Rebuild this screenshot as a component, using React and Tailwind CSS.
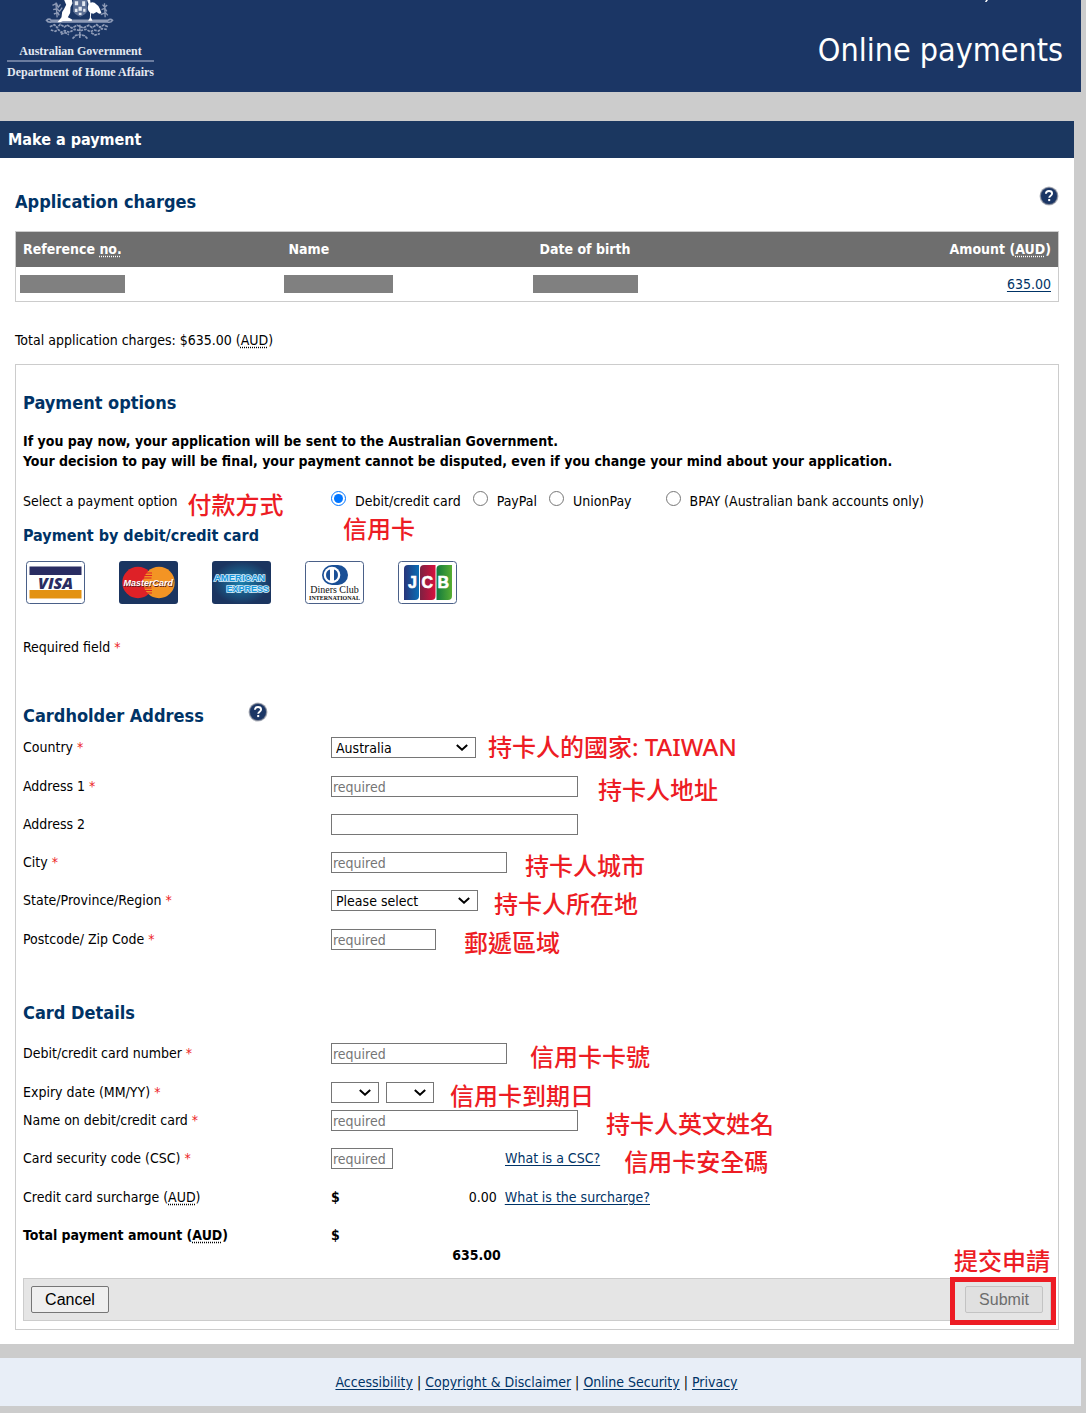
import { useState } from 'react'

const paymentOptions = [
  { id: 'card', label: 'Debit/credit card', gap: 'ml-0' },
  { id: 'paypal', label: 'PayPal', gap: 'ml-3' },
  { id: 'unionpay', label: 'UnionPay', gap: 'ml-3' },
  { id: 'bpay', label: 'BPAY (Australian bank accounts only)', gap: 'ml-[34px]' },
]

const footerLinks = ['Accessibility', 'Copyright & Disclaimer', 'Online Security', 'Privacy']

const fieldClass = 'h-[21px] shrink-0 border border-[#767676] bg-white'

const Note = ({ className = '', children }) => (
  <span
    lang="zh-Hant"
    className={`h-5 shrink-0 whitespace-nowrap font-['Noto_Sans','Noto_Sans_CJK_TC',sans-serif] text-2xl leading-5 font-medium text-[#ed1c24] ${className}`}
  >
    {children}
  </span>
)

const Aud = () => (
  <>
    (<abbr title="Australian dollars" className="underline-offset-2">AUD</abbr>)
  </>
)

const Link = ({ children }) => (
  <a href="#" className="text-[#003366] underline underline-offset-2">{children}</a>
)

const HelpButton = () => (
  <button type="button" aria-label="Help" className="size-5 shrink-0">
    <svg viewBox="0 0 20 20" className="size-5">
      <circle cx="10" cy="10" r="9.5" fill="#b4b8c0" />
      <circle cx="10" cy="10" r="8.7" fill="#6b7388" />
      <circle cx="10" cy="10" r="8" fill="#1b3665" />
      <path
        d="M6.9 7.8C7 5.900 8.300 5 10 5c1.900 0 3.100 1 3.100 2.500 0 2.200-2.900 2.200-2.900 4.300"
        fill="none"
        stroke="#fff"
        strokeWidth="1.900"
      />
      <rect x="9.200" y="13" width="2" height="2.100" fill="#fff" />
    </svg>
  </button>
)

const Crest = () => (
  <svg viewBox="130 0 215 120" className="h-10 w-[72px]" aria-hidden="true">
    {/* shield */}
    <path d="M217 0h42v34q-4 10-21 16q-17-6-21-16z" fill="#5d7095" />
    <path d="M222 4h10v12h-10zM244 4h9v14h-9zM233 20h10v12h-10zM222 26h8v10h-8zM247 26h7v9h-7zM234 38h8v7h-8z" fill="#e3e8f0" />
    {/* wattle and scrolls */}
    <g fill="none" stroke="#8d9ab6" strokeWidth="5">
      <path d="M137 61q8-7 14 0h170q8-6 14 0q-5 8-15 5H152q-11 2-15-5z" />
      <path d="M155 16l12-6 5 12 7-9M157 29l11-3 8 8 8-11M159 42l12-4 4 8M165 8l4 44M305 14l7 8 7-7M302 29l10-4 6 9M300 44l14-6 7 8M311 10l2 42" strokeWidth="4" />
      <path d="M147 80l14-6 8 9 9-10 13 8 8-6 14 9 16-8 18 8 17-8 10 7 14-9 9 8 12-7 14 6" strokeDasharray="9 2" />
      <path d="M150 90l13 4 10-5 8 8 11-5 14 5 15-9 17 4 18-4 12 7 12-5 13 3 9-7 16 2" strokeDasharray="8 3" />
      <path d="M180 103l14-5 10 6M215 116l10-10 12-2 14 3 9 9M271 98l12 7 14-4M237 74v40" strokeDasharray="9 2" />
    </g>
    {/* kangaroo */}
    <path d="M190 0L213 0L215 10L209 22L208 39L201 52L213 58V63H186L180 66L170 67L182 52L184 36L190 26L196 14z" fill="#fff" />
    {/* emu */}
    <path d="M259 0h9l1 8q5-3 12 0q12 8 16 18l5 14l-7 1l-8-5l-9 5l-7-1l-1 12l5 10h-13l5-8l1-16q-8-6-7-17l2-9z" fill="#fff" />
  </svg>
)

const CardLogos = () => (
  <div className="mt-[15px] flex gap-[34px] pl-[3px]">
    <svg viewBox="0 0 59 43" className="h-[43px] w-[59px]" role="img" aria-label="Visa">
      <rect x=".5" y=".5" width="58" height="42" rx="3" fill="#fff" stroke="#4a6088" />
      <rect x="3.500" y="5.500" width="52" height="8.500" fill="#292c62" />
      <rect x="3.500" y="29" width="52" height="8.500" fill="#e39211" />
      <text x="12" y="27.500" fontFamily="Open Sans" fontWeight="800" fontStyle="italic" fontSize="16" fill="#292c62">VISA</text>
    </svg>
    <svg viewBox="0 0 59 43" className="h-[43px] w-[59px]" role="img" aria-label="MasterCard">
      <rect width="59" height="43" rx="3" fill="#1b3560" />
      <circle cx="19" cy="21.500" r="15.700" fill="#de2127" />
      <circle cx="40" cy="21.500" r="15.700" fill="#f39424" />
      <path d="M26 12h7M25 14.500h8M24.500 17h8M24.500 27h8M25 29.500h8M26 32h7" stroke="#de2127" strokeWidth="1.200" />
      <g fontFamily="Liberation Sans" fontWeight="700" fontStyle="italic" fontSize="9">
        <text x="5" y="26" fill="#5c1a1f" aria-hidden="true">MasterCard</text>
        <text x="4.500" y="25" fill="#fff">MasterCard</text>
      </g>
    </svg>
    <svg viewBox="0 0 59 43" className="h-[43px] w-[59px]" role="img" aria-label="American Express">
      <defs>
        <radialGradient id="amex">
          <stop offset="0" stopColor="#1a80ad" />
          <stop offset="1" stopColor="#1b3560" />
        </radialGradient>
      </defs>
      <rect width="59" height="43" rx="3" fill="url(#amex)" />
      <g fontFamily="Liberation Sans" fontWeight="700" fill="#1596dc" stroke="#d8eefa" strokeWidth="1.600" paintOrder="stroke">
        <text x="2" y="20" fontSize="9.500">AMERICAN</text>
        <text x="14.500" y="31" fontSize="9">EXPRESS</text>
      </g>
    </svg>
    <svg viewBox="0 0 59 43" className="h-[43px] w-[59px]" role="img" aria-label="Diners Club International">
      <rect x=".5" y=".5" width="58" height="42" rx="3" fill="#fff" stroke="#4a6088" />
      <path d="M27 4h6a10 10 0 0 1 0 20h-6a10 10 0 0 1 0-20z" fill="#1a4f96" />
      <circle cx="27" cy="14" r="8.300" fill="#fff" />
      <path d="M25 8.500a5.800 5.800 0 0 0 0 11zM29 8.500a5.800 5.800 0 0 1 0 11z" fill="#1a4f96" />
      <text x="29.500" y="32" textAnchor="middle" fontFamily="Liberation Serif" fontSize="10" fill="#111">Diners Club</text>
      <text x="29.500" y="39" textAnchor="middle" fontFamily="Liberation Serif" fontWeight="700" fontSize="6" fill="#111">INTERNATIONAL</text>
    </svg>
    <svg viewBox="0 0 59 43" className="h-[43px] w-[59px]" role="img" aria-label="JCB">
      <defs>
        <linearGradient id="jcb-blue"><stop offset="0" stopColor="#27357a" /><stop offset="1" stopColor="#0a6db5" /></linearGradient>
        <linearGradient id="jcb-red"><stop offset="0" stopColor="#7c2142" /><stop offset="1" stopColor="#d8103d" /></linearGradient>
        <linearGradient id="jcb-green"><stop offset="0" stopColor="#127a3e" /><stop offset="1" stopColor="#57ad33" /></linearGradient>
      </defs>
      <rect x=".5" y=".5" width="58" height="42" rx="3" fill="#fff" stroke="#4a6088" />
      <path d="M10 4h11v31q0 4-4 4H6V8q0-4 4-4z" fill="url(#jcb-blue)" />
      <path d="M26 4h11.500v31q0 4-4 4H22V8q0-4 4-4z" fill="url(#jcb-red)" />
      <path d="M43 4h11v31q0 4-4 4H38.500V8q0-4 4.500-4z" fill="url(#jcb-green)" />
      <g fontFamily="Liberation Sans" fontWeight="700" fontSize="16" fill="#fff" stroke="#fff" strokeWidth=".6">
        <text x="10" y="27">J</text>
        <text x="23.500" y="27">C</text>
        <text x="39.500" y="27">B</text>
      </g>
    </svg>
  </div>
)

const Row = ({ id, label, required, className = 'h-[38px]', children }) => (
  <div className={`flex items-start ${className}`}>
    <label htmlFor={id} className="w-[308px] shrink-0">
      {label}
      {required && <span className="text-[#ed1c24]"> *</span>}
    </label>
    {children}
  </div>
)

const TextField = ({ id, width, placeholder = 'required' }) => (
  <input
    id={id}
    type="text"
    placeholder={placeholder}
    className={`${fieldClass} px-px placeholder:text-[#757575] ${width}`}
  />
)

const Select = ({ width, children, ...props }) => (
  <div className="relative flex shrink-0">
    <select className={`${fieldClass} appearance-none pl-1 leading-4 ${width}`} {...props}>
      {children}
    </select>
    <svg viewBox="0 0 12 7" className="pointer-events-none absolute top-[7px] right-2 h-[7px] w-3" aria-hidden="true">
      <path d="M.8 1L6 5.700L11.200 1" fill="none" stroke="#000" strokeWidth="2" />
    </svg>
  </div>
)

const App = () => {
  const [option, setOption] = useState('card')

  return (
    <div className="min-h-screen bg-[#cccccc] font-['DejaVu_Sans_Condensed','DejaVu_Sans',sans-serif] text-sm leading-5 text-black">
      <header className="relative mr-[5px] flex h-[92px] items-start justify-between bg-[#1b3665] text-white">
        <div className="flex flex-col items-center pl-[7px] font-['Liberation_Serif',serif] text-xs leading-4 font-bold text-[#e3e8f0]">
          <Crest />
          <p className="mt-[3px]">Australian Government</p>
          <div className="mt-px h-[2px] w-full bg-[#6b7c9f]" />
          <p className="mt-[2px]">Department of Home Affairs</p>
        </div>
        <h1 className="pt-[30px] pr-[18px] text-[32px] leading-10">Online payments</h1>
        <svg viewBox="0 0 4 2" className="absolute top-0 right-[93px] h-[2px] w-1" aria-hidden="true">
          <path d="M1 2L2 0H4L2.500 2z" fill="#fff" />
        </svg>
      </header>

      <main className="mt-[29px] mr-3 bg-white">
        <h2 className="bg-[#1b3760] pl-2 text-base leading-[37px] font-bold text-white">Make a payment</h2>

        <div className="px-[15px] pt-7 pb-[14px]">
          <div className="flex items-start justify-between">
            <h3 className="pt-1 text-lg leading-6 font-bold text-[#003366]">Application charges</h3>
            <HelpButton />
          </div>

          <table className="mt-[17px] w-full border-collapse border border-[#cccccc] text-left">
            <thead className="bg-[#6e6e6e] text-white">
              <tr className="h-[35px]">
                <th className="w-[266px] pl-[7px]">Reference <abbr title="number" className="underline-offset-2">no.</abbr></th>
                <th className="w-[251px] pl-[7px]">Name</th>
                <th className="pl-[7px]">Date of birth</th>
                <th className="pr-[7px] text-right">Amount <Aud /></th>
              </tr>
            </thead>
            <tbody>
              <tr className="h-[35px]">
                <td className="pl-1"><div className="h-[18px] w-[105px] bg-[#808080]" /></td>
                <td className="pl-0.5"><div className="h-[18px] w-[109px] bg-[#808080]" /></td>
                <td><div className="h-[18px] w-[105px] bg-[#808080]" /></td>
                <td className="pr-[7px] text-right"><Link>635.00</Link></td>
              </tr>
            </tbody>
          </table>

          <p className="mt-7">Total application charges: $635.00 <Aud /></p>

          <form className="mt-[14px] border border-[#cccccc] px-[7px] pb-2" onSubmit={(e) => e.preventDefault()}>
            <h3 className="mt-[26px] text-lg leading-6 font-bold text-[#003366]">Payment options</h3>
            <p className="mt-4 font-bold">
              If you pay now, your application will be sent to the Australian Government.
              <br />
              Your decision to pay will be final, your payment cannot be disputed, even if you change your mind about your application.
            </p>

            <fieldset className="mt-5 flex h-5 items-start">
              <div className="flex w-[308px] shrink-0">
                <span>Select a payment option</span>
                <Note className="ml-[10px] pt-1">付款方式</Note>
              </div>
              {paymentOptions.map(({ id, label, gap }) => (
                <label key={id} className={`relative flex shrink-0 items-start ${gap}`}>
                  <input
                    type="radio"
                    name="payment"
                    checked={option === id}
                    onChange={() => setOption(id)}
                    className="size-[15px] accent-[#0075ff]"
                  />
                  <span className="pl-[9px] whitespace-nowrap">{label}</span>
                  {id === 'card' && <Note className="absolute top-7 left-3">信用卡</Note>}
                </label>
              ))}
            </fieldset>

            <h4 className="mt-[15px] text-base leading-5 font-bold text-[#003366]">Payment by debit/credit card</h4>
            <CardLogos />

            <p className="mt-[33px]">Required field <span className="text-[#ed1c24]">*</span></p>

            <div className="mt-[45px] flex h-[35px] items-start">
              <h3 className="w-[225px] pt-[2px] text-lg leading-6 font-bold text-[#003366]">Cardholder Address</h3>
              <HelpButton />
            </div>
            <Row id="country" label="Country" required className="h-[39px]">
              <Select id="country" width="w-[145px]">
                <option>Australia</option>
              </Select>
              <Note className="ml-3">持卡人的國家: TAIWAN</Note>
            </Row>
            <Row id="address1" label="Address 1" required>
              <TextField id="address1" width="w-[247px]" />
              <Note className="ml-5 pt-1">持卡人地址</Note>
            </Row>
            <Row id="address2" label="Address 2">
              <TextField id="address2" width="w-[247px]" placeholder="" />
            </Row>
            <Row id="city" label="City" required>
              <TextField id="city" width="w-[176px]" />
              <Note className="ml-[18px] pt-1">持卡人城市</Note>
            </Row>
            <Row id="state" label="State/Province/Region" required className="h-[39px]">
              <Select id="state" width="w-[147px]">
                <option>Please select</option>
              </Select>
              <Note className="ml-4 pt-1">持卡人所在地</Note>
            </Row>
            <Row id="postcode" label="Postcode/ Zip Code" required>
              <TextField id="postcode" width="w-[105px]" />
              <Note className="ml-7 pt-1">郵遞區域</Note>
            </Row>

            <h3 className="mt-[34px] mb-[18px] text-lg leading-6 font-bold text-[#003366]">Card Details</h3>
            <Row id="number" label="Debit/credit card number" required className="h-[39px]">
              <TextField id="number" width="w-[176px]" />
              <Note className="ml-[23px] pt-1">信用卡卡號</Note>
            </Row>
            <Row id="month" label="Expiry date (MM/YY)" required className="h-7">
              <Select id="month" width="w-12" />
              <div className="ml-[7px]">
                <Select aria-label="Expiry year" width="w-12" />
              </div>
              <Note className="ml-4 pt-1">信用卡到期日</Note>
            </Row>
            <Row id="holder" label="Name on debit/credit card" required>
              <TextField id="holder" width="w-[247px]" />
              <Note className="ml-7 pt-1">持卡人英文姓名</Note>
            </Row>
            <Row id="csc" label="Card security code (CSC)" required className="h-[39px]">
              <div className="w-[174px] shrink-0"><TextField id="csc" width="w-[62px]" /></div>
              <Link>What is a CSC?</Link>
              <Note className="ml-6 pt-1">信用卡安全碼</Note>
            </Row>
            <div className="flex h-[38px]">
              <span className="w-[308px]">Credit card surcharge <Aud /></span>
              <b>$</b>
              <span className="mr-2 w-[157px] text-right">0.00</span>
              <Link>What is the surcharge?</Link>
            </div>
            <div className="flex h-[53px] font-bold">
              <span className="w-[308px]">Total payment amount <Aud /></span>
              <span>$</span>
              <span className="w-[161px] pt-5 text-right">635.00</span>
            </div>

            <div className="relative flex justify-between border border-[#cccccc] bg-[#e5e5e5] p-[7px] font-['Liberation_Sans',sans-serif] text-base leading-6">
              <button type="button" className="h-[27px] w-[78px] rounded-[2px] border border-[#767676] bg-[#efefef]">Cancel</button>
              <button type="submit" disabled className="h-[27px] w-[78px] rounded-[2px] border border-[#c3c3c3] bg-[#e0e0e0] text-[#6d6d6d]">Submit</button>
              <div className="pointer-events-none absolute -top-[2px] -right-[6px] h-12 w-[106px] border-5 border-[#ed1c24]" />
              <Note className="absolute -top-7 right-0">提交申請</Note>
            </div>
          </form>
        </div>
      </main>

      <footer className="mt-[14px] mr-[5px] flex h-12 items-center justify-center bg-[#e8eef7] pr-2">
        {footerLinks.map((text, i) => (
          <span key={text} className="whitespace-pre">
            {i > 0 && ' | '}
            <Link>{text}</Link>
          </span>
        ))}
      </footer>
    </div>
  )
}

export default App
